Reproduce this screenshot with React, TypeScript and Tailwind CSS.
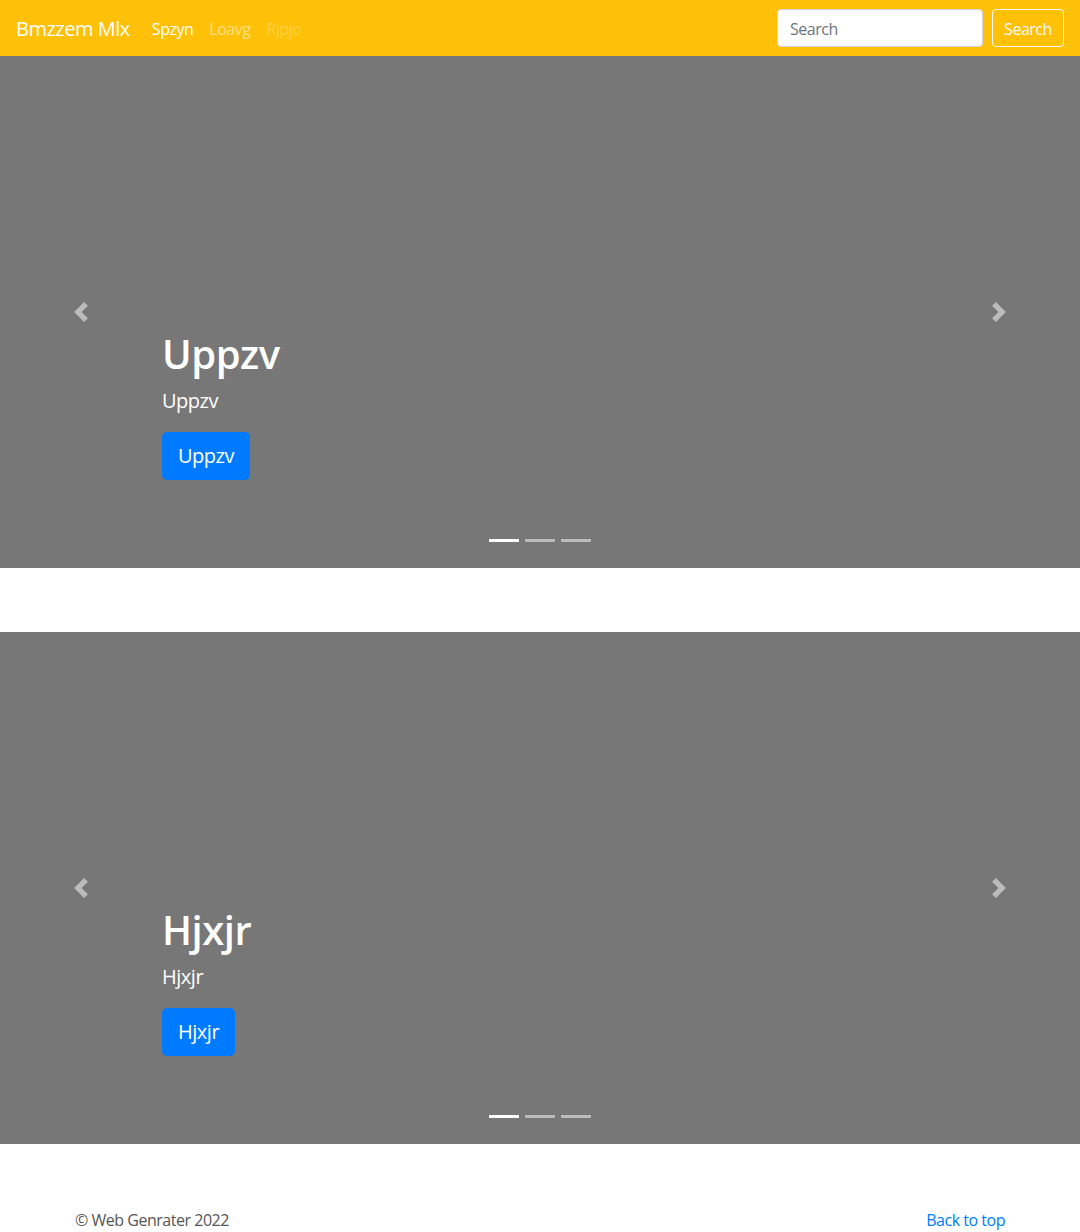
import { useState } from "react";

const slides = ["Uppzv", "Hjxjr"];

function Chevron({ dir }: { dir: "left" | "right" }) {
  return (
    <svg width="20" height="20" viewBox="0 0 8 8" fill="rgba(255,255,255,0.5)">
      {dir === "left" ? (
        <path d="M5.25 0l-4 4 4 4 1.5-1.5L4.25 4l2.5-2.5L5.25 0z" />
      ) : (
        <path d="M2.75 0l-1.5 1.5L3.75 4l-2.5 2.5L2.75 8l4-4-4-4z" />
      )}
    </svg>
  );
}

function Carousel({ title }: { title: string }) {
  const [active, setActive] = useState(0);
  return (
    <div className="relative h-[512px] bg-[#777777]">
      <button
        className="absolute left-0 top-0 bottom-0 w-[15%] flex items-center justify-center"
        onClick={() => setActive((active + 2) % 3)}
      >
        <Chevron dir="left" />
      </button>
      <button
        className="absolute right-0 top-0 bottom-0 w-[15%] flex items-center justify-center"
        onClick={() => setActive((active + 1) % 3)}
      >
        <Chevron dir="right" />
      </button>
      <div className="absolute left-[15%] right-[15%] bottom-[52px] pb-5 pt-5 text-left text-white">
        <h1 className="text-[40px] leading-[48px] font-semibold mb-2">{title}</h1>
        <p className="text-[20px] leading-[30px] mb-4">{title}</p>
        <p className="mb-4">
          <a
            href="#"
            className="inline-block bg-[#007bff] text-white text-[20px] leading-[30px] px-4 py-[9px] rounded-[5px]"
          >
            {title}
          </a>
        </p>
      </div>
      <ol className="absolute left-0 right-0 bottom-0 mb-4 flex justify-center">
        {[0, 1, 2].map((i) => (
          <li
            key={i}
            onClick={() => setActive(i)}
            className={
              "w-[30px] h-[3px] mx-[3px] my-[10px] bg-white cursor-pointer " +
              (i === active ? "opacity-100" : "opacity-50")
            }
          />
        ))}
      </ol>
    </div>
  );
}

export default function App() {
  return (
    <div
      className="min-h-[1232px] bg-white text-[#212529] text-[16px] leading-[1.5] tracking-[-0.03em]"
      style={{ fontFamily: '"Open Sans", "Noto Sans", sans-serif' }}
    >
      <nav className="h-[56px] bg-[#ffc107] flex items-center px-4">
        <a href="#" className="text-white text-[20px] mr-[14px] pt-[2px]">
          Bmzzem Mlx
        </a>
        <ul className="flex pt-[2px]">
          <li>
            <a href="#" className="block px-2 text-white">Spzyn</a>
          </li>
          <li>
            <a href="#" className="block px-2 text-white/50">Loavg</a>
          </li>
          <li>
            <a href="#" className="block px-2 text-white/25">Rjpjo</a>
          </li>
        </ul>
        <form className="ml-auto flex items-center">
          <input
            type="text"
            placeholder="Search"
            className="w-[206px] h-[38px] px-3 pt-[2px] bg-white border border-[#ced4da] rounded-[4px] text-[16px] placeholder:text-[#6c757d] outline-none mr-[9px]"
          />
          <button
            type="button"
            className="w-[72px] h-[38px] pt-[2px] border border-[#f8f9fa] rounded-[4px] text-[#f8f9fa]"
          >
            Search
          </button>
        </form>
      </nav>
      <Carousel title={slides[0]} />
      <div className="h-[64px]" />
      <Carousel title={slides[1]} />
      <footer className="pt-16 px-[75px] flex justify-between">
        <p className="text-[#555555]">© Web Genrater 2022</p>
        <a href="#" className="text-[#007bff]">Back to top</a>
      </footer>
    </div>
  );
}
